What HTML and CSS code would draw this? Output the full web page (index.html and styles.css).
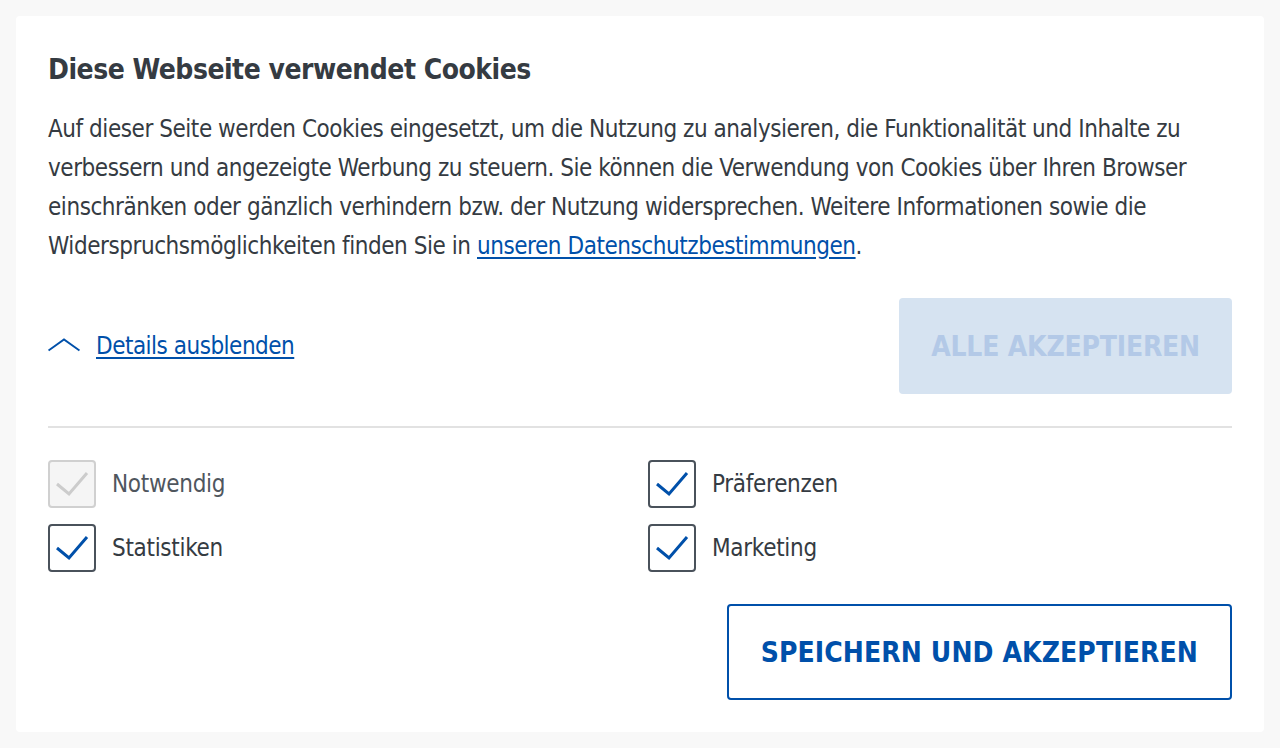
FILE: index.html
```html
<!DOCTYPE html>
<html lang="de">
<head>
<meta charset="utf-8">
<title>Cookies</title>
<link rel="stylesheet" href="styles.css">
</head>
<body>
<div class="card">
  <h1 class="title">Diese Webseite verwendet Cookies</h1>
  <p class="text">Auf dieser Seite werden Cookies eingesetzt, um die Nutzung zu analysieren, die Funktionalität und Inhalte zu verbessern und angezeigte Werbung zu steuern. Sie können die Verwendung von Cookies über Ihren Browser einschränken oder gänzlich verhindern bzw. der Nutzung widersprechen. Weitere Informationen sowie die Widerspruchsmöglichkeiten finden Sie in <a class="link" href="#">unseren Datenschutzbestimmungen</a>.</p>
  <div class="details-row">
    <a class="details" href="#">
      <svg class="chevron" width="32" height="14" viewBox="0 0 32 14"><path d="M0.5 12.5 L16 1.5 L31.5 12.5" fill="none" stroke="#0050aa" stroke-width="2"/></svg>
      <span class="details-text">Details ausblenden</span>
    </a>
    <button class="btn-all">ALLE AKZEPTIEREN</button>
  </div>
  <hr class="divider">
  <div class="options">
    <label class="opt disabled"><span class="box"><svg width="44" height="44" viewBox="0 0 44 44"><path d="M7 22 L19 32 L37 11" fill="none" stroke="#cccccc" stroke-width="3"/></svg></span><span class="lbl">Notwendig</span></label>
    <label class="opt"><span class="box"><svg width="44" height="44" viewBox="0 0 44 44"><path d="M7 22 L19 32 L37 11" fill="none" stroke="#0050aa" stroke-width="3"/></svg></span><span class="lbl">Präferenzen</span></label>
    <label class="opt"><span class="box"><svg width="44" height="44" viewBox="0 0 44 44"><path d="M7 22 L19 32 L37 11" fill="none" stroke="#0050aa" stroke-width="3"/></svg></span><span class="lbl">Statistiken</span></label>
    <label class="opt"><span class="box"><svg width="44" height="44" viewBox="0 0 44 44"><path d="M7 22 L19 32 L37 11" fill="none" stroke="#0050aa" stroke-width="3"/></svg></span><span class="lbl">Marketing</span></label>
  </div>
  <div class="save-row">
    <button class="btn-save">SPEICHERN UND AKZEPTIEREN</button>
  </div>
</div>
</body>
</html>
```
FILE: styles.css
```css
* { box-sizing: border-box; }
html, body { margin: 0; padding: 0; }
body {
  background: #f8f8f8;
  font-family: "DejaVu Sans Condensed", "Liberation Sans", sans-serif;
  color: #353b42;
  padding: 16px;
}
.card {
  background: #ffffff;
  border-radius: 4px;
  padding: 34px 32px 32px 32px;
}
.title {
  margin: 0;
  font-size: 28px;
  line-height: 40px;
  font-weight: 700;
  letter-spacing: -0.5px;
  color: #353b42;
}
.text {
  margin: 20px 0 0 0;
  font-size: 24px;
  line-height: 39px;
  letter-spacing: -0.45px;
}
.link { color: #0050aa; text-decoration: underline; text-underline-offset: 3px; }
.details-row {
  margin-top: 32px;
  display: flex;
  justify-content: space-between;
  align-items: center;
}
.details {
  display: flex;
  align-items: center;
  gap: 16px;
  color: #0050aa;
  text-decoration: none;
  font-size: 24px;
  letter-spacing: -0.5px;
}
.chevron { display: block; margin-top: -3px; }
.details-text { text-decoration: underline; text-underline-offset: 3px; }
.btn-all {
  height: 96px;
  padding: 0 32px;
  border: 0;
  border-radius: 4px;
  background: #d6e3f1;
  color: #b3c9e7;
  font-family: inherit;
  font-size: 28px;
  font-weight: 700;
  letter-spacing: -0.2px;
}
.divider {
  margin: 32px 0 0 0;
  border: 0;
  height: 2px;
  background: #e2e2e2;
}
.options {
  margin-top: 32px;
  display: grid;
  grid-template-columns: 1fr 1fr;
  column-gap: 16px;
  row-gap: 16px;
}
.opt {
  display: flex;
  align-items: center;
  gap: 16px;
  font-size: 24px;
  letter-spacing: -0.3px;
  color: #353b42;
}
.box {
  width: 48px;
  height: 48px;
  border: 2px solid #4a525b;
  border-radius: 4px;
  display: flex;
  align-items: center;
  justify-content: center;
  background: #ffffff;
}
.box svg { display: block; }
.disabled .box { border-color: #d0d0d0; background: #f5f5f5; }
.disabled .lbl { color: #4f565e; }
.save-row {
  margin-top: 32px;
  display: flex;
  justify-content: flex-end;
}
.btn-save {
  height: 96px;
  padding: 0 32px;
  border: 2px solid #0050aa;
  border-radius: 4px;
  background: #ffffff;
  color: #0050aa;
  font-family: inherit;
  font-size: 28px;
  font-weight: 700;
  letter-spacing: 0.1px;
}
```
